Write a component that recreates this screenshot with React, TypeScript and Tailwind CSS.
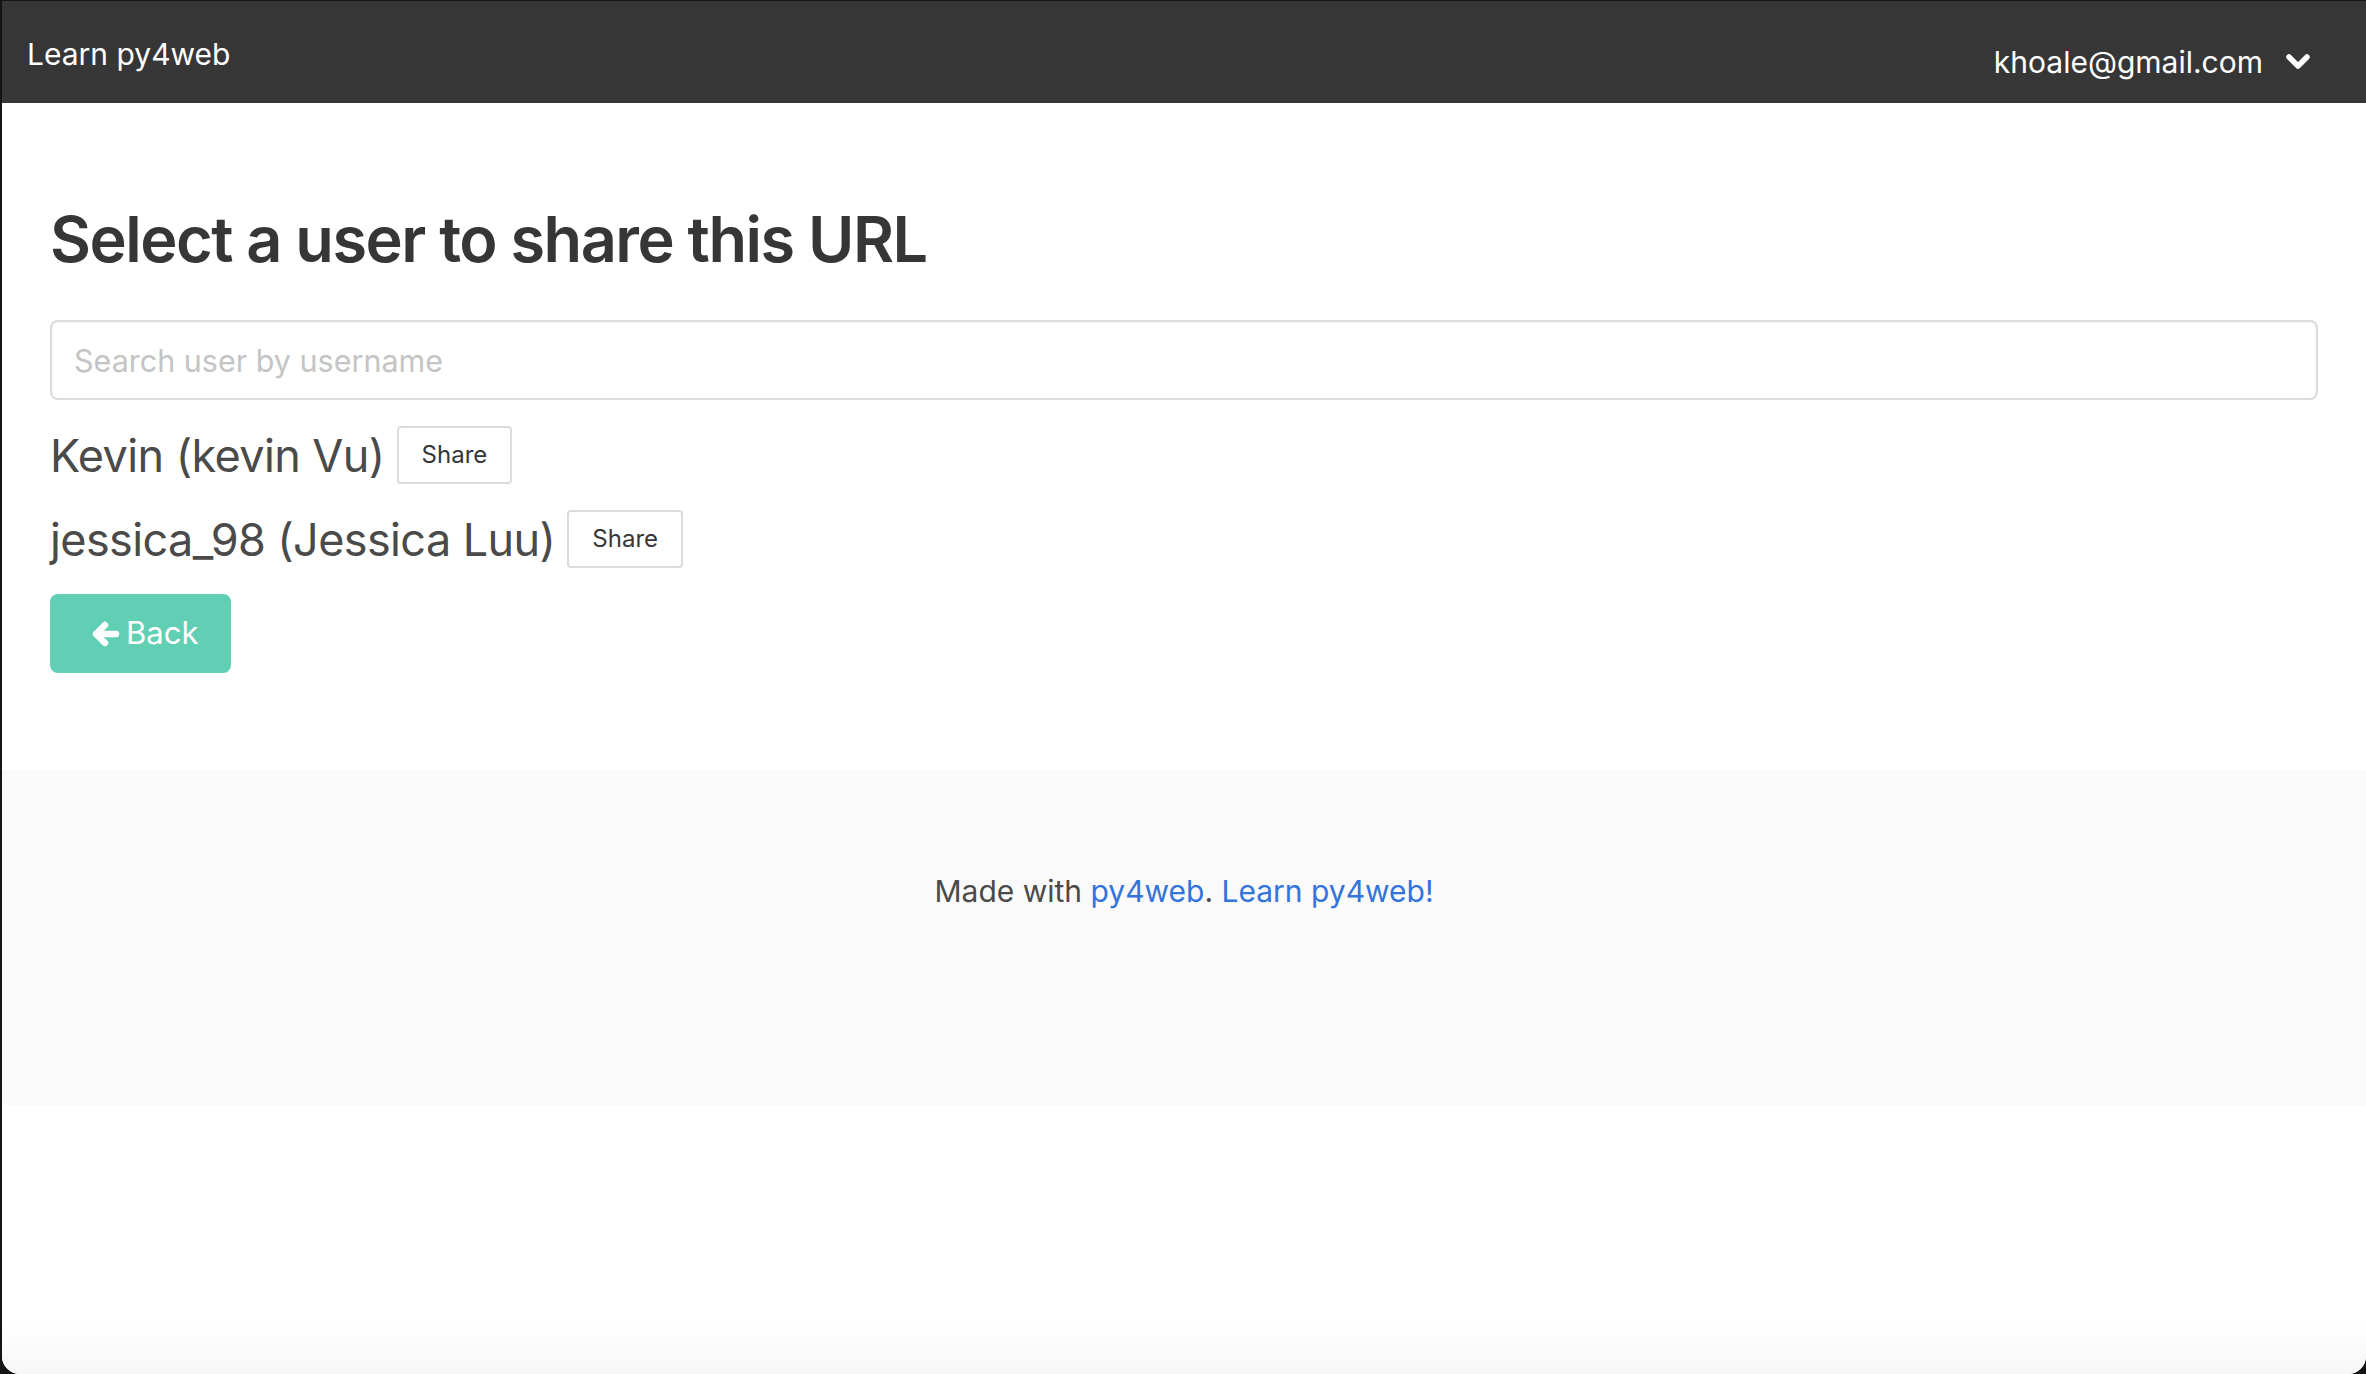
import React, { useState } from 'react';

const ChevronDown: React.FC = () => (
  <svg width="26" height="20" viewBox="0 0 26 20" fill="none">
    <polyline
      points="4,5 13,14 22,5"
      stroke="white"
      strokeWidth="5.5"
      strokeLinecap="round"
      strokeLinejoin="round"
    />
  </svg>
);

const ArrowLeft: React.FC = () => (
  <svg width="28" height="26" viewBox="0 0 28 26" fill="none">
    <polyline
      points="13,4 4,13 13,22"
      stroke="white"
      strokeWidth="6.5"
      strokeLinecap="round"
      strokeLinejoin="round"
    />
    <line x1="5" y1="13" x2="24" y2="13" stroke="white" strokeWidth="6.5" strokeLinecap="round" />
  </svg>
);

const users = [
  { id: 1, label: 'Kevin (kevin Vu)' },
  { id: 2, label: 'jessica_98 (Jessica Luu)' },
];

const App: React.FC = () => {
  const [query, setQuery] = useState('');

  return (
    <div className="h-[1374px] bg-[#141414] pl-[2px] pt-[1px] font-['Inter',sans-serif]">
      <div className="flex h-full flex-col overflow-hidden rounded-b-[18px] bg-white">
        {/* navbar */}
        <nav className="flex h-[102px] shrink-0 items-start justify-between bg-[#363636] text-white">
          <a className="pl-[25px] pt-[29px] text-[30px] leading-[48px]">Learn py4web</a>
          <div className="flex items-start gap-[22px] pr-[55px] pt-[37px]">
            <span className="text-[30px] leading-[48px]">khoale@gmail.com</span>
            <span className="pt-[14px]">
              <ChevronDown />
            </span>
          </div>
        </nav>

        {/* main section */}
        <section className="px-[48px] pb-[97px] pt-[100px]">
          <h1 className="text-[63px] font-semibold leading-[72px] tracking-[-1.5px] text-[#363636]">
            Select a user to share this URL
          </h1>

          <input
            type="text"
            value={query}
            onChange={(e) => setQuery(e.target.value)}
            placeholder="Search user by username"
            className="mt-[45px] block h-[80px] w-full rounded-[8px] border-2 border-[#dbdbdb] px-[22px] text-[30.5px] text-[#363636] shadow-[inset_0_1px_2px_rgba(10,10,10,0.05)] placeholder-[#c4c4c4] focus:outline-none"
          />

          <div className="mt-[26px] flex flex-col items-start gap-[26px]">
            {users.map((user) => (
              <div key={user.id} className="flex h-[58px] items-center">
                <span className="text-[45px] leading-none tracking-[-0.6px] text-[#4a4a4a]">{user.label}</span>
                <button className="ml-[12px] h-[58px] rounded-[4px] border-2 border-[#dbdbdb] bg-white px-[23px] text-[24px] text-[#363636]">
                  Share
                </button>
              </div>
            ))}

            <button className="flex h-[79px] w-[181px] items-center rounded-[8px] bg-[#61cfb3] pl-[42px] text-[31px] text-white">
              <ArrowLeft />
              <span className="ml-[6px]">Back</span>
            </button>
          </div>
        </section>

        {/* footer */}
        <footer className="h-[335px] shrink-0 bg-[#fafafa] pt-[97px] text-center text-[30px] leading-[48px] text-[#4a4a4a]">
          Made with <a className="text-[#3273dc]">py4web</a>. <a className="text-[#3273dc]">Learn py4web!</a>
        </footer>

        <div className="flex-1 bg-gradient-to-b from-white from-80% to-[#f7f7f7]" />
      </div>
    </div>
  );
};

export default App;
